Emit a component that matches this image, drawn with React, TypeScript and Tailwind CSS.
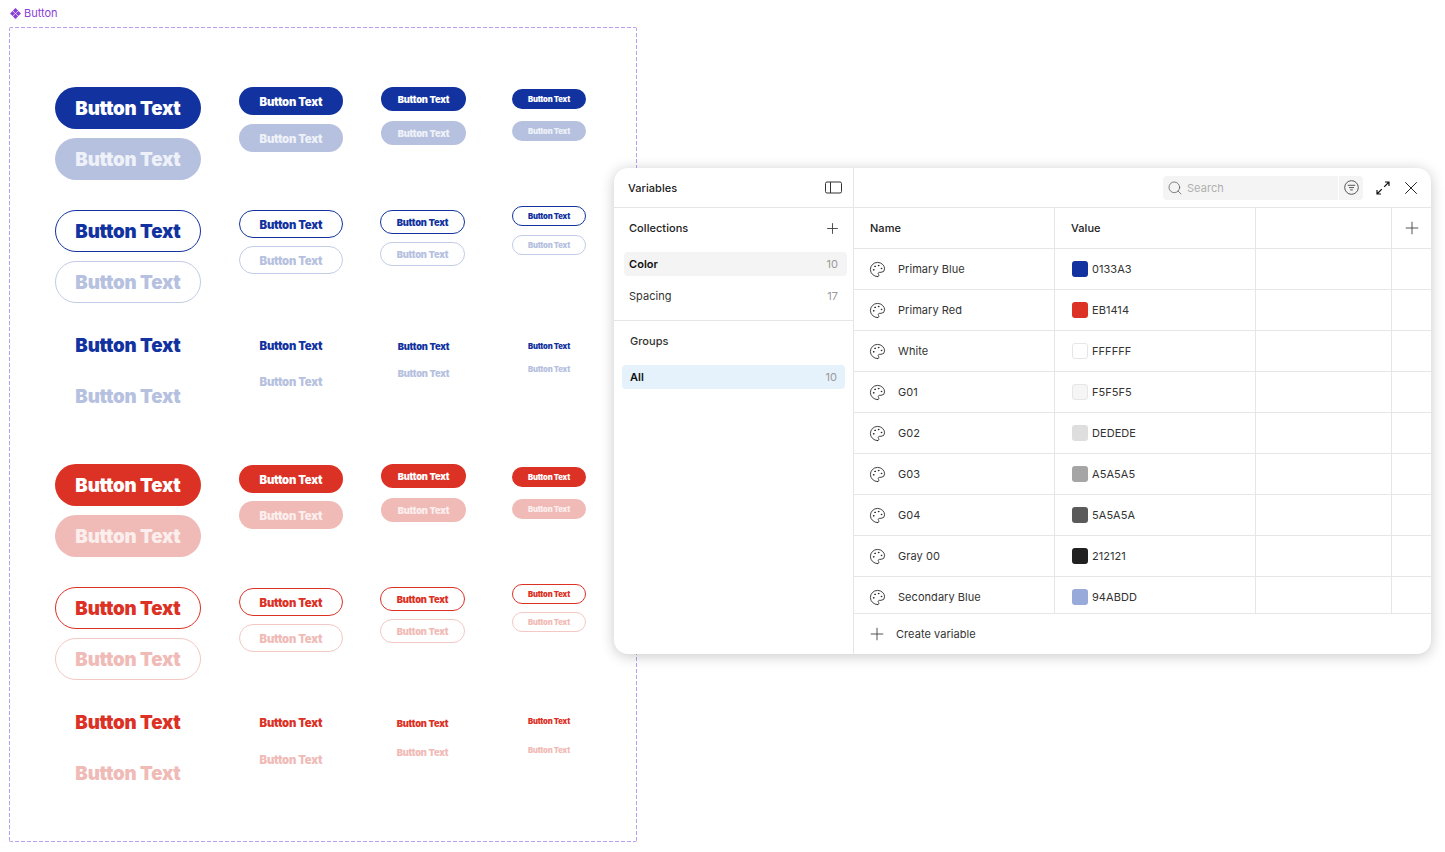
import { Palette, Plus, Search, X } from 'lucide-react';
import clsx from 'clsx';

type Tone = 'blue' | 'red';
type Kind = 'solid' | 'outline' | 'ghost';

// one entry per size, left to right
const sizes = [
  { box: 'w-[146px] h-[42px] pt-[2px]', text: 'text-[18.7px]' },
  { box: 'w-[104px] h-[28px] pt-[2px]', text: 'text-[11.3px]' },
  { box: 'w-[85px] h-[24px] pt-[2px]', text: 'text-[9.4px]' },
  { box: 'w-[74px] h-[20px] pt-px', text: 'text-[7.7px]' },
];

const styles = {
  blue: {
    solid: ['bg-[#12339f] text-white', 'bg-[#b6c1e0] text-[#eef1f8]'],
    outline: ['border border-[#12339f] text-[#12339f]', 'border border-[#c3cce6] text-[#b6c1e0]'],
    ghost: ['text-[#12339f]', 'text-[#b6c1e0]'],
  },
  red: {
    solid: ['bg-[#dc3125] text-white', 'bg-[#f0bbb7] text-[#fbeeed]'],
    outline: ['border border-[#dc3125] text-[#dc3125]', 'border border-[#f3c8c5] text-[#f0bbb7]'],
    ghost: ['text-[#dc3125]', 'text-[#f0bbb7]'],
  },
};

// offset from the top of the row + gap between the two buttons, per size
const rows: { tone: Tone; kind: Kind; height: string; cells: string[] }[] = [
  { tone: 'blue', kind: 'solid', height: 'h-[119px]', cells: ['gap-[9px]', 'gap-[9px]', 'gap-[10px] ml-[1px]', 'gap-[12px] mt-[2px]'] },
  { tone: 'blue', kind: 'outline', height: 'h-[118px]', cells: ['gap-[9px] mt-[4px]', 'gap-[8px] mt-[4px]', 'gap-[8px] mt-[4px]', 'gap-[9px]'] },
  { tone: 'blue', kind: 'ghost', height: 'h-[140px]', cells: ['gap-[9px]', 'gap-[8px] mt-[7px]', 'gap-[3px] mt-[10px] ml-[1px]', 'gap-[3px] mt-[12px]'] },
  { tone: 'red', kind: 'solid', height: 'h-[120px]', cells: ['gap-[9px]', 'gap-[8px] mt-[1px]', 'gap-[10px] ml-[1px]', 'gap-[12px] mt-[3px]'] },
  { tone: 'red', kind: 'outline', height: 'h-[117px]', cells: ['gap-[9px] mt-[3px]', 'gap-[8px] mt-[4px]', 'gap-[8px] mt-[3px]', 'gap-[8px]'] },
  { tone: 'red', kind: 'ghost', height: 'h-[100px]', cells: ['gap-[9px]', 'gap-[9px] mt-[7px]', 'gap-[5px] mt-[10px]', 'gap-[9px] mt-[10px]'] },
];

const variables = [
  { name: 'Primary Blue', value: '0133A3', swatch: 'bg-[#12339f]' },
  { name: 'Primary Red', value: 'EB1414', swatch: 'bg-[#dc3125]' },
  { name: 'White', value: 'FFFFFF', swatch: 'bg-white border border-[#e6e6e6]' },
  { name: 'G01', value: 'F5F5F5', swatch: 'bg-[#f5f5f5] border border-[#e6e6e6]' },
  { name: 'G02', value: 'DEDEDE', swatch: 'bg-[#dedede]' },
  { name: 'G03', value: 'A5A5A5', swatch: 'bg-[#a5a5a5]' },
  { name: 'G04', value: '5A5A5A', swatch: 'bg-[#5a5a5a]' },
  { name: 'Gray 00', value: '212121', swatch: 'bg-[#212121]' },
  { name: 'Secondary Blue', value: '94ABDD', swatch: 'bg-[#98aada]' },
];

function ComponentIcon() {
  return (
    <svg width="11" height="11" viewBox="0 0 12 12" fill="#8a3fd9">
      <path d="M6 0 8.8 2.8 6 5.6 3.2 2.8ZM2.8 3.2 5.6 6 2.8 8.8 0 6ZM9.2 3.2 12 6 9.2 8.8 6.4 6ZM6 6.4 8.8 9.2 6 12 3.2 9.2Z" />
    </svg>
  );
}

function SampleButton({ cls, size }: { cls: string; size: number }) {
  return (
    <div className={clsx('flex items-center justify-center rounded-full font-black tracking-[-0.2px]', sizes[size].box, sizes[size].text, cls)}>
      Button Text
    </div>
  );
}

function ButtonFrame() {
  return (
    <div className="ml-[9px] h-[815px] w-[628px] rounded-[2px] bg-no-repeat pl-[46px] pt-[60px] [background-image:repeating-linear-gradient(90deg,#bb9ff2_0_4px,transparent_4px_6px),repeating-linear-gradient(90deg,#bb9ff2_0_4px,transparent_4px_6px),repeating-linear-gradient(180deg,#bb9ff2_0_4px,transparent_4px_6px),repeating-linear-gradient(180deg,#bb9ff2_0_4px,transparent_4px_6px)] [background-position:0_0,0_100%,0_0,100%_0] [background-size:100%_1px,100%_1px,1px_100%,1px_100%]">
      {rows.map((row, i) => (
        <div key={i} className={clsx('grid grid-cols-[184px_141px_132px_74px] items-start', row.height)}>
          {row.cells.map((cell, size) => (
            <div key={size} className={clsx('flex flex-col', cell)}>
              <SampleButton cls={styles[row.tone][row.kind][0]} size={size} />
              <SampleButton cls={styles[row.tone][row.kind][1]} size={size} />
            </div>
          ))}
        </div>
      ))}
    </div>
  );
}

function Sidebar() {
  return (
    <div className="flex w-[240px] shrink-0 flex-col border-r border-[#e6e6e6]">
      <div className="flex h-[40px] items-center justify-between border-b border-[#e6e6e6] pl-[14px] pr-[11px]">
        <span className="pt-px font-medium text-[#212121]">Variables</span>
        <svg width="17" height="13" viewBox="0 0 17 13" fill="none" stroke="#333" strokeWidth="1">
          <rect x="0.5" y="1" width="16" height="11" rx="1.5" />
          <path d="M5.5 1v11" />
        </svg>
      </div>
      <div className="flex h-[40px] items-center justify-between pl-[15px] pr-[12px]">
        <span className="font-medium text-[#212121]">Collections</span>
        <Plus size={17} strokeWidth={1.3} className="text-[#444]" />
      </div>
      <div className="mx-[10px] mt-[4px] flex h-[24px] w-[223px] items-center justify-between rounded-[4px] bg-[#f4f4f4] pl-[5px] pr-[9px]">
        <span className="font-semibold text-[#111]">Color</span>
        <span className="text-[#999]">10</span>
      </div>
      <div className="mx-[10px] mt-[8px] flex h-[24px] w-[223px] items-center justify-between pl-[5px] pr-[9px]">
        <span className="text-[#333]">Spacing</span>
        <span className="text-[#999]">17</span>
      </div>
      <div className="mt-[12px] flex h-[41px] items-center border-t border-[#e6e6e6] pl-[16px]">
        <span className="font-medium text-[#333]">Groups</span>
      </div>
      <div className="ml-[8px] mt-[4px] flex h-[24px] w-[223px] items-center justify-between rounded-[4px] bg-[#e5f1fb] pl-[8px] pr-[8px]">
        <span className="font-semibold text-[#111]">All</span>
        <span className="text-[#999]">10</span>
      </div>
    </div>
  );
}

function Toolbar() {
  return (
    <div className="flex h-[40px] items-center justify-end border-b border-[#e6e6e6] pr-[9px]">
      <div className="flex h-[24px] w-[200px] items-center overflow-hidden rounded-[4px] bg-[#f4f4f4]">
        <div className="flex flex-1 items-center gap-[4px] pl-[4px] pt-px text-[#b0b0b0]">
          <Search size={16} strokeWidth={1.1} className="text-[#555]" />
          Search
        </div>
        <div className="flex h-full w-[25px] items-center justify-center border-l border-white">
          <svg width="15" height="15" viewBox="0 0 15 15" fill="none" stroke="#555" strokeWidth="1">
            <circle cx="7.5" cy="7.5" r="6.8" />
            <path d="M3.8 5.3h7.4M5 7.6h5M6.2 9.9h2.6" />
          </svg>
        </div>
      </div>
      <svg className="ml-[13px]" width="14" height="14" viewBox="0 0 14 14" fill="none" stroke="#111" strokeWidth="1.2">
        <path d="M8.2 5.8 13 1M9 1h4v4M5.8 8.2 1 13M1 9v4h4" />
      </svg>
      <X size={22} strokeWidth={1} className="ml-[10px] text-[#111]" />
    </div>
  );
}

function VariablesTable() {
  return (
    <div className="flex min-w-0 flex-1 flex-col">
      <Toolbar />
      <div className="grid h-[41px] shrink-0 grid-cols-[201px_201px_136px_39px] border-b border-[#e6e6e6]">
        <div className="flex items-center border-r border-[#e6e6e6] pl-[16px] font-medium text-[#212121]">Name</div>
        <div className="flex items-center border-r border-[#e6e6e6] pl-[16px] font-medium text-[#212121]">Value</div>
        <div className="border-r border-[#e6e6e6]" />
        <div className="flex items-center justify-center">
          <Plus size={20} strokeWidth={1.1} className="text-[#444]" />
        </div>
      </div>
      <div className="h-[365px] shrink-0 overflow-hidden border-b border-[#e6e6e6]">
        {variables.map((v) => (
          <div key={v.name} className="grid h-[41px] grid-cols-[201px_201px_136px_39px] border-b border-[#e6e6e6]">
            <div className="flex items-center gap-[12px] border-r border-[#e6e6e6] pl-[15px] text-[#333]">
              <Palette size={17} strokeWidth={1.2} className="text-[#222]" />
              {v.name}
            </div>
            <div className="flex items-center gap-[4px] border-r border-[#e6e6e6] pl-[17px] text-[#333]">
              <div className={clsx('h-[16px] w-[16px] rounded-[3px]', v.swatch)} />
              {v.value}
            </div>
            <div className="border-r border-[#e6e6e6]" />
            <div />
          </div>
        ))}
      </div>
      <div className="flex h-[40px] items-center gap-[9px] pl-[13px] text-[#333]">
        <Plus size={20} strokeWidth={1.1} className="text-[#444]" />
        Create variable
      </div>
    </div>
  );
}

export default function App() {
  return (
    <div className="relative h-[852px] w-[1445px] overflow-hidden bg-white font-['Inter',sans-serif]">
      <div className="flex h-[27px] items-center gap-[3px] pl-[10px] text-[11px] text-[#8a3fd9]">
        <ComponentIcon />
        Button
      </div>
      <ButtonFrame />
      {/* variables window floats over the canvas */}
      <div className="absolute left-[614px] top-[168px] flex h-[486px] w-[817px] overflow-hidden rounded-[14px] bg-white text-[11px] tracking-[0.05px] shadow-[0_2px_14px_rgba(0,0,0,0.22)]">
        <Sidebar />
        <VariablesTable />
      </div>
    </div>
  );
}
